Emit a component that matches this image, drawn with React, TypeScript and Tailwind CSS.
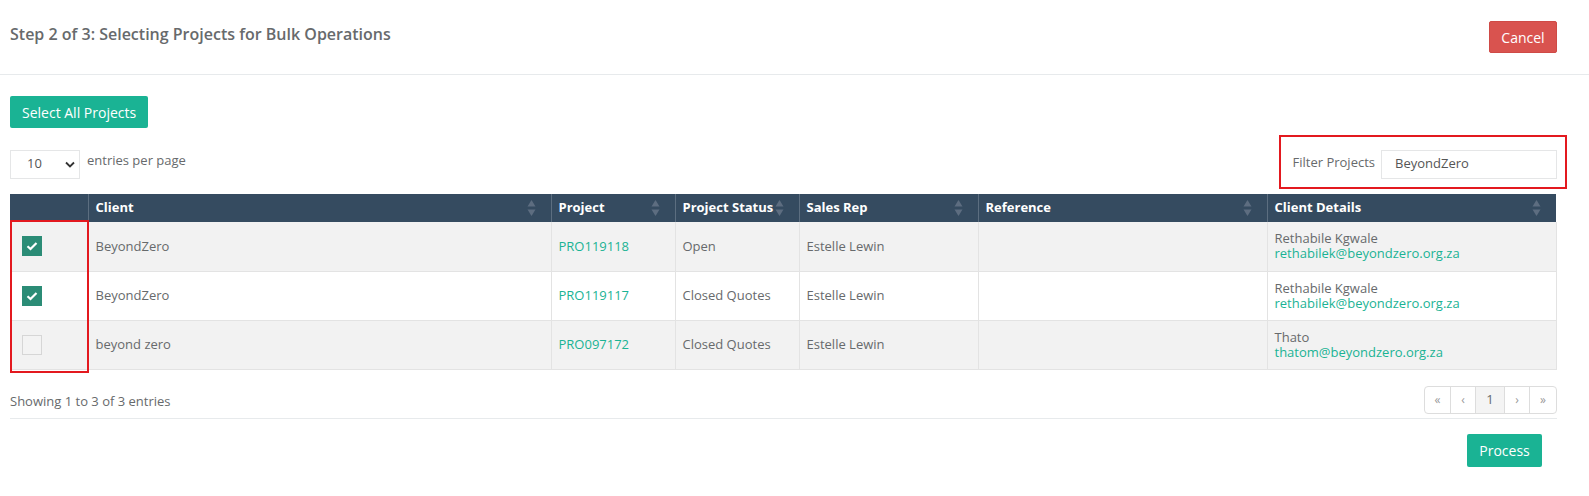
import React from "react";

const SortIcon = () => (
  <svg width="9" height="18" viewBox="0 0 9 18" className="shrink-0">
    <path d="M4.5 1 L8.5 7.5 L0.5 7.5 Z" fill="#5d6d80" />
    <path d="M4.5 17 L8.5 10.5 L0.5 10.5 Z" fill="#5d6d80" />
  </svg>
);

const Check = ({ checked }: { checked: boolean }) =>
  checked ? (
    <div className="w-5 h-5 bg-[#2b8c76] flex items-center justify-center">
      <svg width="12" height="10" viewBox="0 0 12 10">
        <path d="M1.5 5.2 L4.5 8 L10.5 2" fill="none" stroke="white" strokeWidth="2.2" />
      </svg>
    </div>
  ) : (
    <div className="w-5 h-5 bg-[#f3f3f3] border border-[#d6d6d6]" />
  );

const rows = [
  { checked: true, client: "BeyondZero", project: "PRO119118", status: "Open", rep: "Estelle Lewin", name: "Rethabile Kgwale", email: "rethabilek@beyondzero.org.za" },
  { checked: true, client: "BeyondZero", project: "PRO119117", status: "Closed Quotes", rep: "Estelle Lewin", name: "Rethabile Kgwale", email: "rethabilek@beyondzero.org.za" },
  { checked: false, client: "beyond zero", project: "PRO097172", status: "Closed Quotes", rep: "Estelle Lewin", name: "Thato", email: "thatom@beyondzero.org.za" },
];

const headers = [
  { label: "", w: "w-[78px]", sort: false },
  { label: "Client", w: "w-[463px]", sort: true },
  { label: "Project", w: "w-[124px]", sort: true },
  { label: "Project Status", w: "w-[124px]", sort: true },
  { label: "Sales Rep", w: "w-[179px]", sort: true },
  { label: "Reference", w: "w-[289px]", sort: true },
  { label: "Client Details", w: "w-[289px]", sort: true },
];

export default function App() {
  return (
    <div className="w-full h-[496px] overflow-hidden bg-white text-[#676a6c] text-[13px] relative" style={{ fontFamily: '"Open Sans", sans-serif' }}>
      <div className="h-[75px] border-b border-[#e7eaec] flex items-start justify-between pl-[10px] pr-[32px]">
        <div className="text-[16px] font-semibold mt-[22px] text-[#676a6c]">Step 2 of 3: Selecting Projects for Bulk Operations</div>
        <button className="mt-[21px] h-[32px] w-[68px] bg-[#d9534f] border border-[#cf4a46] text-white text-[14px] rounded-[2px]">Cancel</button>
      </div>

      <div className="px-[10px]">
        <button className="mt-[21px] h-[32px] px-[12px] bg-[#1ab394] text-white text-[14px] rounded-[2px]">Select All Projects</button>

        <div className="flex items-center justify-between mt-[22px] h-[28px] w-[1547px]">
          <div className="flex items-center">
            <div className="w-[70px] h-[29px] border border-[#e5e6e7] flex items-center justify-between pl-[16px] pr-[4px] text-[13px] text-[#555]">
              <span>10</span>
              <svg width="10" height="7" viewBox="0 0 10 7"><path d="M1 1.5 L5 5.5 L9 1.5" fill="none" stroke="#333" strokeWidth="1.8" /></svg>
            </div>
            <span className="ml-[7px] -mt-[6px]">entries per page</span>
          </div>
          <div className="flex items-center">
            <span className="mr-[6px] -mt-[2px]">Filter Projects</span>
            <div className="w-[176px] h-[29px] border border-[#e5e6e7] flex items-center pl-[13px] text-[#555]">BeyondZero</div>
          </div>
        </div>

        <table className="mt-[16px] border-collapse table-fixed w-[1546px]">
          <thead>
            <tr className="bg-[#354b60] h-[28px]">
              {headers.map((h, i) => (
                <th key={i} className={`${h.w} p-0 text-left font-bold text-white text-[13px] border-l border-[#5c6e80] first:border-l-0`}>
                  <div className="flex items-center justify-between pl-[7px] pr-[15px]">
                    <span className="whitespace-nowrap">{h.label}</span>
                    {h.sort && <SortIcon />}
                  </div>
                </th>
              ))}
            </tr>
          </thead>
          <tbody>
            {rows.map((r, i) => (
              <tr key={i} className={`h-[49px] ${i % 2 === 0 ? "bg-[#f2f2f2]" : "bg-white"} border-b border-[#e3e3e3]`}>
                <td className="border-r border-[#e3e3e3] pl-[12px]"><Check checked={r.checked} /></td>
                <td className="border-r border-[#e3e3e3] pl-[7px]">{r.client}</td>
                <td className="border-r border-[#e3e3e3] pl-[7px] text-[#1ab394]">{r.project}</td>
                <td className="border-r border-[#e3e3e3] pl-[7px]">{r.status}</td>
                <td className="border-r border-[#e3e3e3] pl-[7px]">{r.rep}</td>
                <td className="border-r border-[#e3e3e3] pl-[7px]"></td>
                <td className="border-r border-[#e3e3e3] pl-[7px] leading-[15px]">
                  <div>{r.name}</div>
                  <div className="text-[#1ab394]">{r.email}</div>
                </td>
              </tr>
            ))}
          </tbody>
        </table>

        <div className="flex items-center justify-between mt-[16px] h-[28px] w-[1547px]">
          <span className="mt-[4px]">Showing 1 to 3 of 3 entries</span>
          <div className="flex h-[28px] border border-[#dddddd] rounded-[4px] overflow-hidden text-[#999]">
            <div className="w-[26px] flex items-center justify-center border-r border-[#dddddd] text-[12px]">«</div>
            <div className="w-[25px] flex items-center justify-center border-r border-[#dddddd] text-[12px]">‹</div>
            <div className="w-[29px] flex items-center justify-center border-r border-[#dddddd] bg-[#f4f4f4] text-[#676a6c] text-[13px]">1</div>
            <div className="w-[25px] flex items-center justify-center border-r border-[#dddddd] text-[12px]">›</div>
            <div className="w-[26px] flex items-center justify-center text-[12px]">»</div>
          </div>
        </div>
        <div className="w-[1547px] border-b border-[#e7eaec] mt-[4px]" />

        <div className="flex justify-end w-[1532px] mt-[15px]">
          <button className="h-[33px] w-[75px] bg-[#1ab394] text-white text-[14px] rounded-[2px]">Process</button>
        </div>
      </div>

      <div className="absolute left-[1279px] top-[135px] w-[288px] h-[54px] border-2 border-[#e3191f] pointer-events-none" />
      <div className="absolute left-[10px] top-[220px] w-[79px] bottom-[123px] border-2 border-[#e3191f] pointer-events-none" />
    </div>
  );
}
